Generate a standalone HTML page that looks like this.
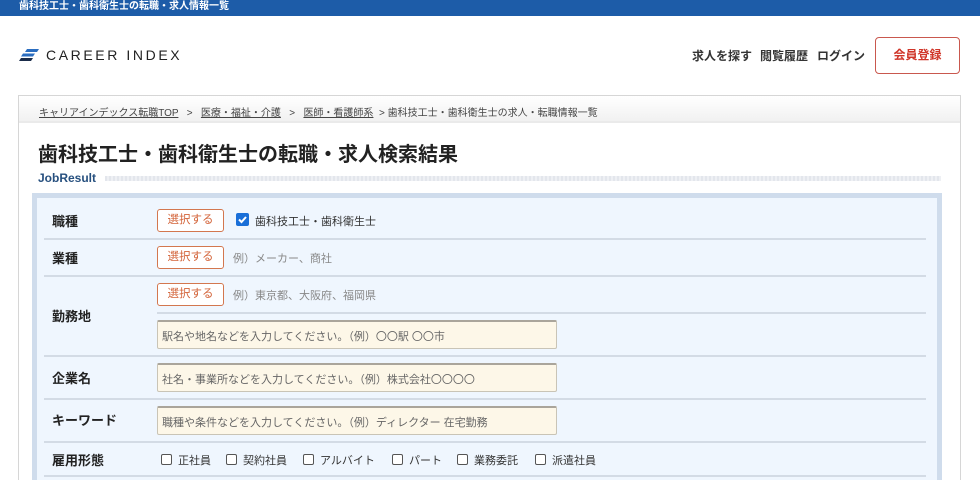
<!DOCTYPE html>
<html><head><meta charset="utf-8"><style>
*{margin:0;padding:0;box-sizing:border-box}
html,body{width:980px;height:480px;overflow:hidden}
body{background:#fff;font-family:"Liberation Sans","Noto Sans CJK JP",sans-serif;color:#222;position:relative}
.a{position:absolute}
.top{left:0;top:0;width:980px;height:16px;background:#1d5ca8;color:#fff;font-size:10px;font-weight:bold;line-height:14px;padding-left:19px}
.logo{left:46px;top:47px;font-size:14px;letter-spacing:2.6px;color:#222}
.nav{top:47px;font-size:12px;font-weight:bold;color:#333}
.reg{left:875px;top:37px;width:85px;height:37px;border:1px solid #c9584e;border-radius:4px;color:#d0362a;font-size:12px;font-weight:bold;text-align:center;line-height:35px}
.card{left:18px;top:95px;width:943px;height:400px;border:1px solid #d6d6d6}
.bc{left:19px;top:96px;width:941px;height:27px;background:linear-gradient(#fff,#f1f1f1);border-bottom:2px solid #eaeaea;font-size:10px;color:#444;padding:8px 0 0 20px;white-space:nowrap}
.bc u{color:#444}
h1{left:38px;top:138px;font-size:20px;font-weight:bold;color:#222}
.jr{left:38px;top:171px;font-size:12px;font-weight:bold;color:#27507f}
.dot{left:105px;top:176px;width:836px;height:5px;background:repeating-linear-gradient(90deg,#e3e6ec 0 2px,#eef0f4 2px 4px)}
.panel{left:32px;top:193px;width:910px;height:300px;border:5px solid #cfdcec;background:#eff6fe}
.line{height:2px;background:#d3dbe5}
.lbl{left:52px;font-size:13px;font-weight:bold;color:#222}
.btn{width:67px;height:23px;border:1px solid #d3774f;border-radius:3px;background:#fff;color:#d3643a;font-size:11.5px;text-align:center;line-height:21px}
.ph{font-size:11px;color:#888}
.inp{left:157px;width:400px;height:29px;border:1px solid #c9c4b6;border-top:2px solid #aaa59b;border-radius:2px;background:#fdf7e8;font-size:11px;color:#666;padding:6px 0 0 4px}
.cb{display:inline-block;width:11px;height:11px;border:1px solid #555;border-radius:2px;background:#fff;vertical-align:-1px;margin-right:6px}
.ct{font-size:11px;color:#333;top:452px}
</style></head><body>
<div class="a top">歯科技工士・歯科衛生士の転職・求人情報一覧</div>
<svg class="a" style="left:19px;top:49px" width="20" height="12"><path d="M8 0h12l-2 3H6z" fill="#2a6dc0"/><path d="M4 4.5h12l-2 3H2z" fill="#2a6dc0"/><path d="M2 9h12l-2 3H0z" fill="#1a2c4a"/></svg>
<div class="a logo">CAREER INDEX</div>
<div class="a nav" style="left:692px">求人を探す</div>
<div class="a nav" style="left:760px">閲覧履歴</div>
<div class="a nav" style="left:817px">ログイン</div>
<div class="a reg">会員登録</div>
<div class="a card"></div>
<div class="a bc"><u>キャリアインデックス転職TOP</u> &nbsp;&nbsp;&gt;&nbsp;&nbsp; <u>医療・福祉・介護</u> &nbsp;&nbsp;&gt;&nbsp;&nbsp; <u>医師・看護師系</u> &nbsp;&gt; 歯科技工士・歯科衛生士の求人・転職情報一覧</div>
<h1 class="a">歯科技工士・歯科衛生士の転職・求人検索結果</h1>
<div class="a jr">JobResult</div>
<div class="a dot"></div>
<div class="a panel"></div>
<div class="a line" style="left:44px;top:238px;width:882px"></div>
<div class="a line" style="left:44px;top:275px;width:882px"></div>
<div class="a line" style="left:157px;top:312px;width:769px"></div>
<div class="a line" style="left:44px;top:355px;width:882px"></div>
<div class="a line" style="left:44px;top:398px;width:882px"></div>
<div class="a line" style="left:44px;top:441px;width:882px"></div>
<div class="a line" style="left:44px;top:475px;width:882px"></div>
<div class="a lbl" style="top:211px">職種</div>
<div class="a btn" style="left:157px;top:209px">選択する</div>
<svg class="a" style="left:236px;top:213px" width="13" height="13"><rect width="13" height="13" rx="2" fill="#1a6fd8"/><path d="M3 6.5l2.5 2.5L10 4" stroke="#fff" stroke-width="2" fill="none"/></svg>
<div class="a" style="left:255px;top:213px;font-size:11px;color:#333">歯科技工士・歯科衛生士</div>
<div class="a lbl" style="top:248px">業種</div>
<div class="a btn" style="left:157px;top:246px">選択する</div>
<div class="a ph" style="left:233px;top:250px">例）メーカー、商社</div>
<div class="a lbl" style="top:306px">勤務地</div>
<div class="a btn" style="left:157px;top:283px">選択する</div>
<div class="a ph" style="left:233px;top:287px">例）東京都、大阪府、福岡県</div>
<div class="a inp" style="top:320px">駅名や地名などを入力してください。（例）〇〇駅 〇〇市</div>
<div class="a lbl" style="top:368px">企業名</div>
<div class="a inp" style="top:363px">社名・事業所などを入力してください。（例）株式会社〇〇〇〇</div>
<div class="a lbl" style="top:410px">キーワード</div>
<div class="a inp" style="top:406px">職種や条件などを入力してください。（例）ディレクター 在宅勤務</div>
<div class="a lbl" style="top:450px">雇用形態</div>
<div class="a ct" style="left:161px"><span class="cb"></span>正社員</div>
<div class="a ct" style="left:226px"><span class="cb"></span>契約社員</div>
<div class="a ct" style="left:303px"><span class="cb"></span>アルバイト</div>
<div class="a ct" style="left:392px"><span class="cb"></span>パート</div>
<div class="a ct" style="left:457px"><span class="cb"></span>業務委託</div>
<div class="a ct" style="left:535px"><span class="cb"></span>派遣社員</div>
</body></html>
